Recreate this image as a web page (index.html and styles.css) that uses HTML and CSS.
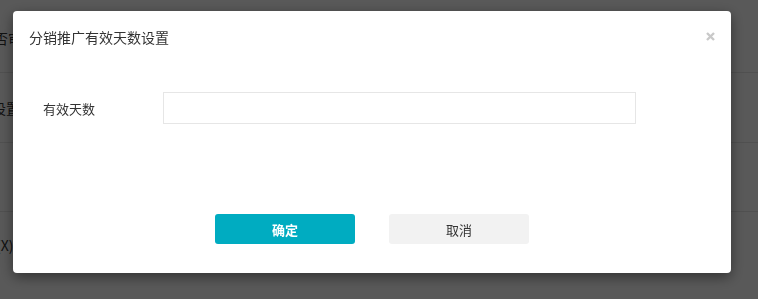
FILE: index.html
```html
<!DOCTYPE html>
<html lang="zh-CN">
<head>
<meta charset="utf-8">
<title>分销推广有效天数设置</title>
<link rel="stylesheet" href="styles.css">
</head>
<body>
<div class="page">
  <div class="row"><span class="row-label label-a">否审</span></div>
  <div class="row"><span class="row-label label-b">设置</span></div>
  <div class="row"><span class="row-label"></span></div>
  <div class="row row-last"><span class="row-label label-c">(X)</span></div>
</div>
<div class="overlay"></div>
<div class="modal">
  <div class="modal-header">
    <span class="modal-title">分销推广有效天数设置</span>
    <button class="modal-close" aria-label="关闭">
      <svg width="9" height="9" viewBox="0 0 9 9"><path d="M1 1 L8 8 M8 1 L1 8" stroke="#c9c9c9" stroke-width="2.4" stroke-linecap="butt"/></svg>
    </button>
  </div>
  <div class="modal-body">
    <div class="form-row">
      <label class="form-label">有效天数</label>
      <input class="form-input" type="text">
    </div>
  </div>
  <div class="modal-footer">
    <button class="btn btn-primary">确定</button>
    <button class="btn btn-default">取消</button>
  </div>
</div>
</body>
</html>
```
FILE: styles.css
```css
* { box-sizing: border-box; }
html, body { margin: 0; padding: 0; }
body {
  font-family: "Noto Sans CJK SC", "Noto Sans", sans-serif;
  background: #fff;
  color: #333;
  overflow: hidden;
  height: 299px;
}
.page {
  padding-top: 3px;
}
.row {
  height: 70px;
  border-bottom: 1px solid #e6e6e6;
  display: flex;
  align-items: center;
}
.row:nth-child(3) { height: 69px; }
.row-last { border-bottom: none; height: 66px; }
.row-label {
  display: block;
  font-size: 14px;
  white-space: nowrap;
  color: #333;
}
.label-a { margin-left: -6px; }
.label-b { margin-left: -8px; }
.label-c { margin-left: -4px; }
.overlay {
  position: fixed;
  inset: 0;
  background: rgba(0, 0, 0, 0.65);
}
.modal {
  position: fixed;
  left: 13px;
  top: 11px;
  width: 718px;
  height: 262px;
  background: #fff;
  border-radius: 4px;
  box-shadow: 0 4px 14px rgba(0, 0, 0, 0.45);
  display: flex;
  flex-direction: column;
}
.modal-header {
  height: 50px;
  padding: 16px 16px 0 16px;
  display: flex;
  justify-content: space-between;
  align-items: flex-start;
}
.modal-title {
  font-size: 14px;
  line-height: 20px;
  color: #333;
}
.modal-close {
  border: none;
  background: none;
  padding: 0;
  margin: 5px 0 0 0;
  width: 9px;
  height: 9px;
  display: block;
  cursor: pointer;
}
.modal-close svg { display: block; }
.modal-body {
  padding: 31px 0 0 30px;
  height: 153px;
}
.form-row {
  display: flex;
  align-items: center;
}
.form-label {
  width: 120px;
  font-size: 13px;
  color: #333;
}
.form-input {
  width: 473px;
  height: 32px;
  border: 1px solid #e6e6e6;
  border-radius: 0;
  outline: none;
  padding: 0 8px;
  background: #fff;
}
.modal-footer {
  display: flex;
  gap: 34px;
  padding-left: 202px;
}
.btn {
  width: 140px;
  height: 30px;
  border: none;
  border-radius: 3px;
  font-family: inherit;
  font-size: 13px;
  cursor: pointer;
  padding: 0;
}
.btn-primary {
  background: #00acc1;
  color: #fff;
  font-weight: bold;
}
.btn-default {
  background: #f2f2f2;
  color: #333;
}
```
